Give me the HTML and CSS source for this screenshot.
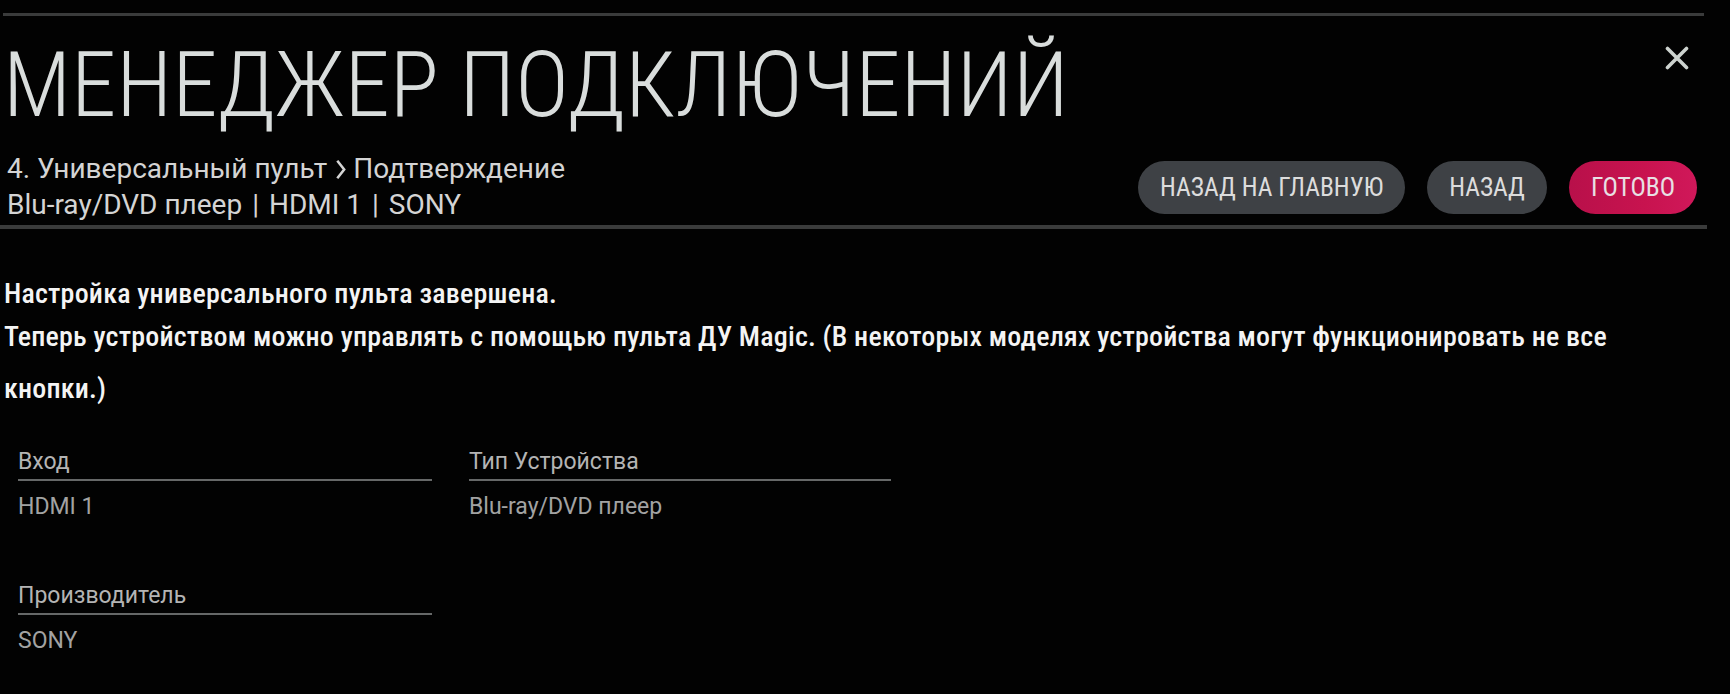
FILE: index.html
```html
<!DOCTYPE html>
<html lang="ru">
<head>
<meta charset="utf-8">
<title>Менеджер подключений</title>
<link rel="stylesheet" href="styles.css">
</head>
<body>
<div class="page">
  <div class="rule rule-top"></div>
  <header class="head">
    <h1 class="title">МЕНЕДЖЕР ПОДКЛЮЧЕНИЙ</h1>
    <button class="close" aria-label="Закрыть">
      <svg viewBox="0 0 24 24" width="24" height="24"><path d="M2.5 2.5 L21.5 21.5 M21.5 2.5 L2.5 21.5" stroke="currentColor" stroke-width="3.6" stroke-linecap="round" fill="none"/></svg>
    </button>
  </header>
  <div class="subrow">
    <div class="crumbs">
      <div class="crumb-line">4. Универсальный пульт<svg class="chev" viewBox="0 0 12 22" width="11" height="21"><path d="M2.5 1.5 L10 11 L2.5 20.5" stroke="currentColor" stroke-width="2.8" fill="none"/></svg>Подтверждение</div>
      <div class="crumb-line">Blu-ray/DVD плеер <span class="sep">|</span> HDMI 1 <span class="sep">|</span> SONY</div>
    </div>
    <div class="buttons">
      <button class="btn">НАЗАД НА ГЛАВНУЮ</button>
      <button class="btn">НАЗАД</button>
      <button class="btn btn-primary">ГОТОВО</button>
    </div>
  </div>
  <div class="rule rule-bottom"></div>
  <div class="message">
    <p class="msg-first">Настройка универсального пульта завершена.</p>
    <p class="msg-second">Теперь устройством можно управлять с помощью пульта ДУ Magic. (В некоторых моделях устройства могут функционировать не все кнопки.)</p>
  </div>
  <div class="fields">
    <div class="field">
      <div class="label">Вход</div>
      <div class="value">HDMI 1</div>
    </div>
    <div class="field">
      <div class="label">Тип Устройства</div>
      <div class="value">Blu-ray/DVD плеер</div>
    </div>
    <div class="field">
      <div class="label">Производитель</div>
      <div class="value">SONY</div>
    </div>
  </div>
</div>
</body>
</html>
```
FILE: styles.css
```css
html, body {
  margin: 0;
  padding: 0;
  background: #020202;
  overflow: hidden;
}
body {
  font-family: Roboto, "Liberation Sans", sans-serif;
  color: #e6e6e6;
}
.page {
  padding-left: 4px;
  height: 694px;
  box-sizing: border-box;
}
.rule {
  background: #3a3b3b;
}
.rule-top {
  height: 3px;
  margin: 13px 26px 0 -1px;
}
.head {
  display: flex;
  justify-content: space-between;
  align-items: flex-start;
  margin-top: 24px;
}
.title {
  margin: 0 0 0 -1px;
  font-family: "Roboto Condensed", Roboto, sans-serif;
  font-weight: 300;
  font-size: 91px;
  line-height: 91px;
  letter-spacing: 0;
  color: #d9dddc;
}
.close {
  margin: 6px 41px 0 0;
  padding: 0;
  width: 24px;
  height: 24px;
  border: 0;
  background: none;
  color: #cdd3cf;
  display: block;
}
.close svg { display: block; }
.subrow {
  display: flex;
  justify-content: space-between;
  align-items: center;
  margin-top: 20px;
  padding-right: 33px;
}
.crumbs {
  padding-left: 3px;
  font-family: Roboto, sans-serif;
  font-size: 28px;
  line-height: 36px;
  color: #d4d4d4;
}
.crumb-line {
  white-space: nowrap;
}
.sep {
  margin: 0 3px;
}
.chev {
  display: inline-block;
  margin: 0 7px 0 8px;
  vertical-align: -2px;
}
.buttons {
  display: flex;
  gap: 22px;
}
.btn {
  height: 53px;
  padding: 0 22px;
  border: 0;
  border-radius: 27px;
  background: #3e4145;
  color: #dcdcdc;
  font-family: "Roboto Condensed", Roboto, sans-serif;
  font-size: 25.5px;
  font-weight: 400;
  display: flex;
  align-items: center;
}
.btn-primary {
  background: linear-gradient(90deg, #b8104a 0%, #c8134f 60%, #d0185a 100%);
  color: #e8e0e4;
}
.rule-bottom {
  height: 4px;
  margin: 2px 23px 0 -4px;
}
.message {
  margin-top: 42px;
  max-width: 1660px;
  font-family: "Roboto Condensed", Roboto, sans-serif;
  font-weight: 500;
  font-size: 28px;
  letter-spacing: 0.2px;
  color: #f4f4f4;
}
.message p {
  margin: 0;
}
.msg-first {
  line-height: 46px;
}
.message .msg-second {
  margin-top: -6px;
  line-height: 52px;
}
.fields {
  display: grid;
  grid-template-columns: 414px 422px;
  column-gap: 37px;
  row-gap: 62px;
  margin-top: 33px;
  padding-left: 14px;
}
.label {
  font-size: 23px;
  line-height: 27px;
  color: #b4b4b4;
  padding-bottom: 4px;
  border-bottom: 2px solid #666868;
}
.value {
  margin-top: 12px;
  font-size: 23px;
  line-height: 27px;
  color: #a2a2a2;
}
```
